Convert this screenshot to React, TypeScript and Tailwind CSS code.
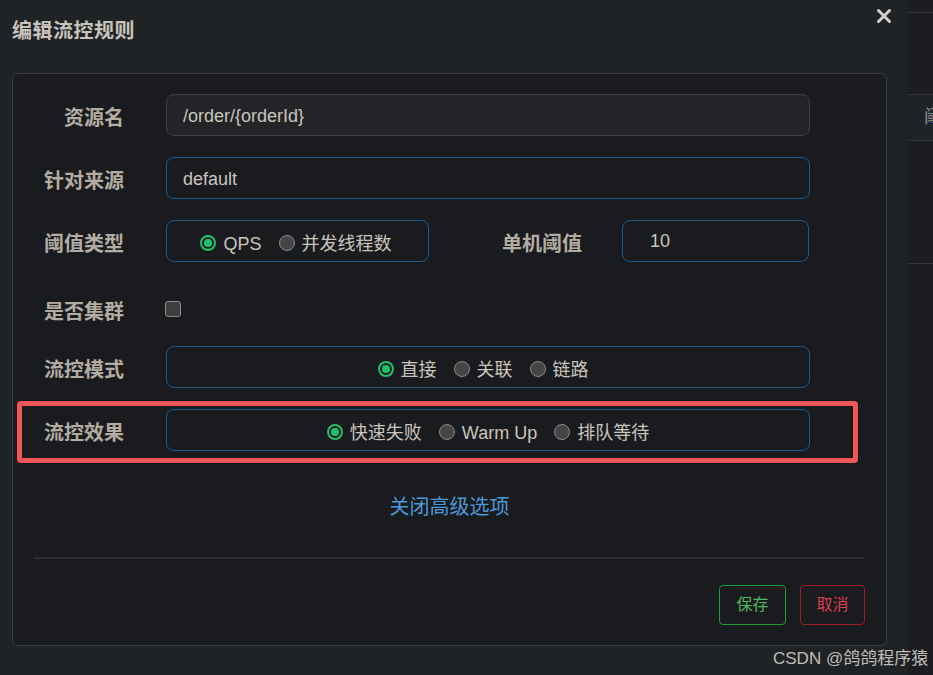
import React from 'react';

const font = { fontFamily: '"Liberation Sans", "Noto Sans CJK SC", sans-serif' };

function Radio({ checked, label }: { checked?: boolean; label: string }) {
  return (
    <label className="flex items-center gap-[7px]">
      {checked ? (
        <span className="w-4 h-4 rounded-full border-2 border-[#1fc16b] p-[2px] flex">
          <span className="flex-1 rounded-full bg-[#1fc16b]" />
        </span>
      ) : (
        <span className="w-4 h-4 rounded-full border-[1.5px] border-[#8a8a8a] bg-[#454545]" />
      )}
      <span className="text-[18px] text-[#c9c4bc] leading-none pt-[2px]">{label}</span>
    </label>
  );
}

function Label({ children }: { children: React.ReactNode }) {
  return (
    <div className="w-[111px] shrink-0 text-right text-[20px] font-bold text-[#b3aca2] leading-none pt-[6px]">
      {children}
    </div>
  );
}

export default function App() {
  return (
    <div className="w-[933px] h-[675px] flex overflow-hidden bg-[#1b1d20] relative" style={font}>
      {/* modal */}
      <div className="w-[908px] shrink-0 h-full bg-[#202326] flex flex-col relative">
        <div className="h-[73px] pl-3 pt-[19px]">
          <h1 className="text-[20px] font-bold text-[#c8c3bc] leading-[24px] tracking-[0.5px]">编辑流控规则</h1>
        </div>
        <button className="absolute left-[876px] top-[8px] w-4 h-4 text-[#d3cfc9]">
          <svg viewBox="0 0 16 16" width="16" height="16" fill="none" stroke="currentColor" strokeWidth="3" strokeLinecap="round">
            <path d="M2.5 2.5 L13.5 13.5 M13.5 2.5 L2.5 13.5" />
          </svg>
        </button>

        <div className="mx-3 w-[875px] h-[573px] rounded-md border border-[#3a3d40] bg-[#1a1b1e] flex flex-col pt-[20px]">
          <div className="flex flex-col gap-[21px]">
            <div className="flex items-center gap-[42px] h-[42px]">
              <Label>资源名</Label>
              <div className="w-[644px] h-[42px] rounded-lg border border-[#3d3f42] bg-[#232427] flex items-center px-4 pt-[2px] text-[18px] text-[#c9c4bc]">
                /order/{'{'}orderId{'}'}
              </div>
            </div>
            <div className="flex items-center gap-[42px] h-[42px]">
              <Label>针对来源</Label>
              <div className="w-[644px] h-[42px] rounded-lg border border-[#1d5a8e] flex items-center px-4 pt-[2px] text-[18px] text-[#c9c4bc]">
                default
              </div>
            </div>
            <div className="flex items-center gap-[42px] h-[42px]">
              <Label>阈值类型</Label>
              <div className="w-[263px] shrink-0 h-[42px] rounded-lg border border-[#1d5a8e] flex items-center justify-center gap-[17px] pt-[3px] pr-[3px]">
                <Radio checked label="QPS" />
                <Radio label="并发线程数" />
              </div>
              <div className="w-[153px] shrink-0 text-right text-[20px] font-bold text-[#b3aca2] leading-none pt-[6px] -ml-[42px]">
                单机阈值
              </div>
              <div className="w-[187px] shrink-0 h-[42px] -ml-[2px] rounded-lg border border-[#1d5a8e] flex items-center px-[27px] text-[18px] text-[#c9c4bc]">
                10
              </div>
            </div>
            <div className="flex items-center gap-[41px] h-[42px] pt-[10px]">
              <Label>是否集群</Label>
              <span className="w-4 h-4 rounded-[3px] border-[1.5px] border-[#8a8a8a] bg-[#3e3e3e]" />
            </div>
            <div className="flex items-center gap-[42px] h-[42px]">
              <Label>流控模式</Label>
              <div className="w-[644px] h-[42px] rounded-lg border border-[#1d5a8e] flex items-center justify-center gap-[17px] pr-[10px] pt-[3px]">
                <Radio checked label="直接" />
                <Radio label="关联" />
                <Radio label="链路" />
              </div>
            </div>
            <div className="flex items-center gap-[42px] h-[42px] relative">
              <div className="absolute left-[4px] -top-[8px] w-[841px] h-[62px] border-[5px] border-[#f45656] rounded-[4px] pointer-events-none" />
              <Label>流控效果</Label>
              <div className="w-[644px] h-[42px] rounded-lg border border-[#1d5a8e] flex items-center justify-center gap-[17px] pt-[3px]">
                <Radio checked label="快速失败" />
                <Radio label="Warm Up" />
                <Radio label="排队等待" />
              </div>
            </div>
          </div>

          <div className="mt-[42px] text-center text-[20px] text-[#4a9ad8] leading-[28px]">关闭高级选项</div>

          <div className="mt-[36px] mx-[21px] h-[2px] bg-[#2c2e31]" />

          <div className="mt-[26px] mr-[21px] flex justify-end gap-[14px]">
            <button className="w-[67px] h-[40px] rounded border border-[#1f9a3b] text-[16px] text-[#4cbb5f]">保存</button>
            <button className="w-[65px] h-[40px] rounded border border-[#a11c2b] text-[16px] text-[#d9404f]">取消</button>
          </div>
        </div>
      </div>

      {/* background page strip */}
      <div className="flex-1 flex flex-col">
        <div className="h-[12px]" />
        <div className="h-px bg-[#34373a]" />
        <div className="h-[81px]" />
        <div className="h-[47px] bg-[#202326] border-t border-b border-[#34373a] flex items-center pl-4 overflow-hidden">
          <span className="text-[18px] text-[#8a8f96] whitespace-nowrap">阈值</span>
        </div>
        <div className="h-[123px] border-b border-[#34373a]" />
      </div>

      <div className="absolute left-[773px] top-[647px] text-[17px] text-[#c0bdb8] leading-[24px] whitespace-nowrap">
        CSDN @鸽鸽程序猿
      </div>
    </div>
  );
}
